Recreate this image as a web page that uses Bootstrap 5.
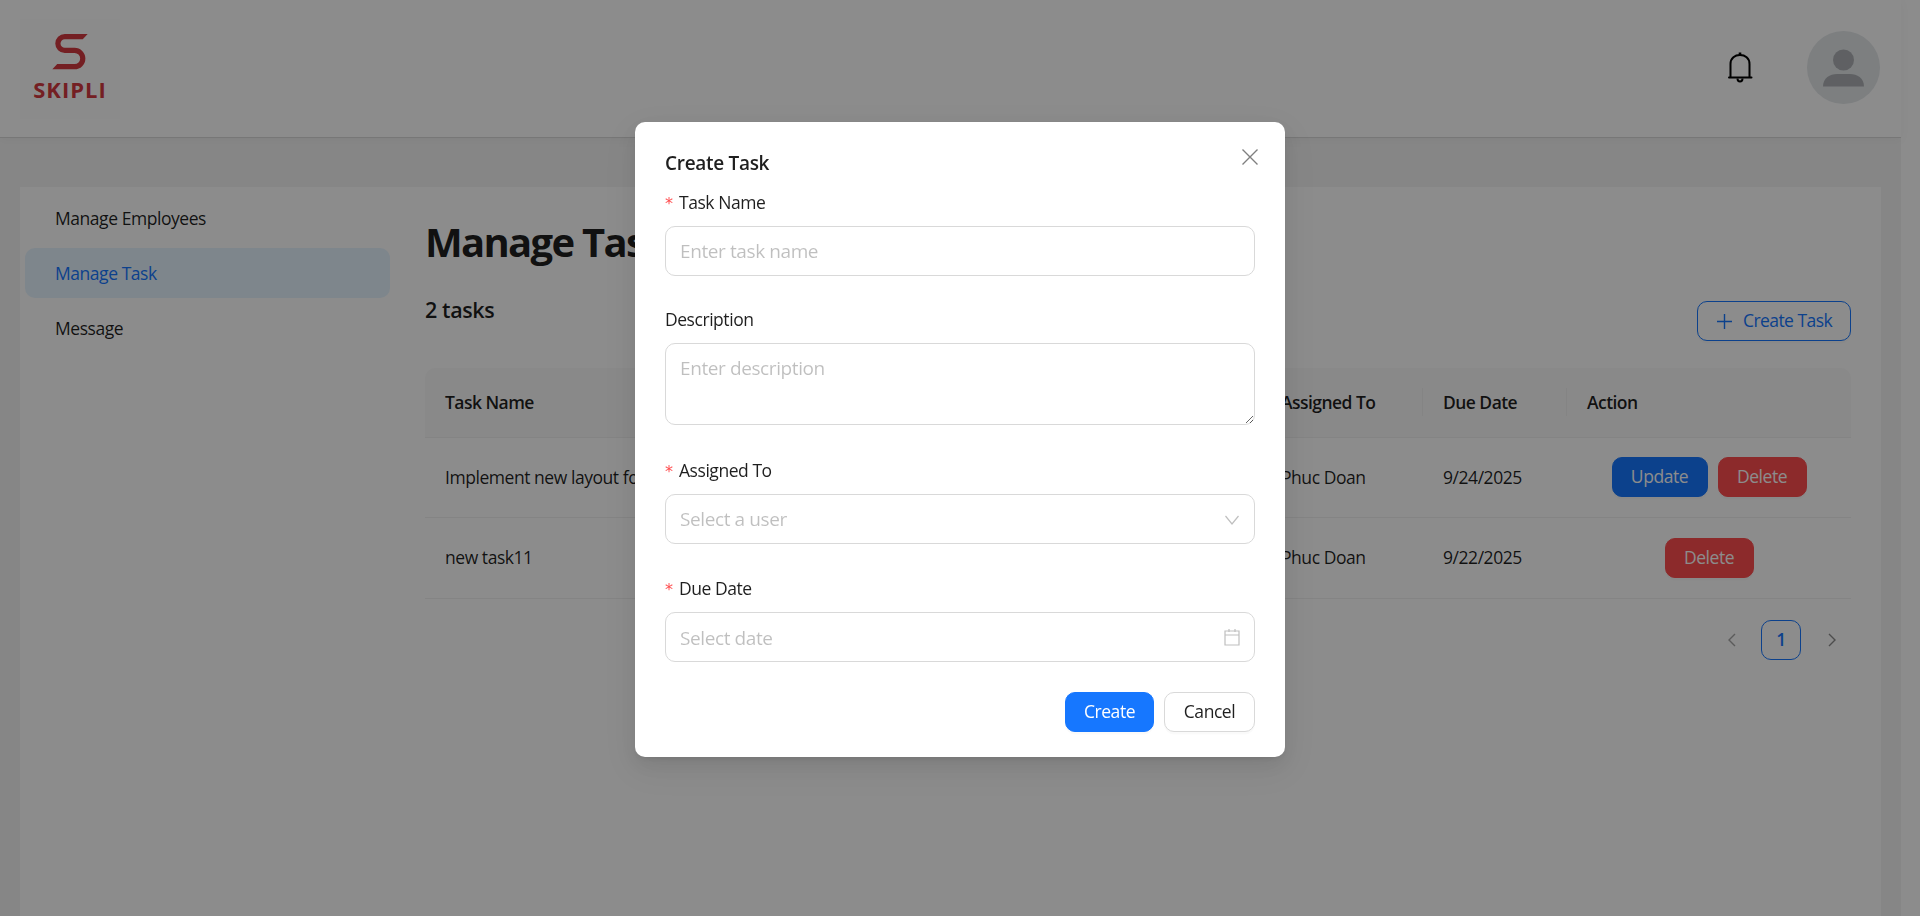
<!DOCTYPE html>
<html lang="en">
<head>
<meta charset="utf-8">
<title>Manage Task</title>
<link href="https://cdn.jsdelivr.net/npm/bootstrap@5.3.0/dist/css/bootstrap.min.css" rel="stylesheet">
<style>
html,body{height:100%;overflow:hidden}
body{background:#fff;padding-right:19px;font-family:"Open Sans","Noto Sans",sans-serif;font-size:17.5px;color:rgba(0,0,0,.88);letter-spacing:-.45px}
.shell{height:916px;background:#f5f5f5;display:flex;flex-direction:column}
.topbar{height:138px;flex:none;background:#fff;border-bottom:1px solid #d9d9d9;box-shadow:0 2px 10px rgba(0,0,0,.04);padding:0 20px}
.logo-box{width:100px;height:100px;background:#fefefe;display:flex;flex-direction:column;align-items:center;padding-top:14px}
.logo-word{font-family:"Open Sans",sans-serif;font-weight:700;font-size:22px;line-height:26px;color:#d33a40;letter-spacing:1px;margin-top:5px}
.bell-wrap{width:44px;height:50px;margin-right:44px;margin-top:-7px}
.avatar-wrap{width:73px;height:73px;margin-right:1px;margin-top:-3px}
.panel-wrap{flex:1;padding:49px 20px 0 20px;min-height:0}
.panel{height:100%;background:#fff;display:flex}
.side{width:375px;flex:none;padding:6px 5px 0 5px}
.side-link{display:block;height:50px;line-height:50px;padding-left:30px;margin-bottom:5px;border-radius:10px;color:rgba(0,0,0,.88);text-decoration:none}
.side-link.is-on{background:#e6f4ff;color:#1677ff}
.work{flex:1;padding:25px 30px 0 30px;min-width:0}
.work h1{font-family:"Open Sans",sans-serif;font-size:40px;line-height:60px;font-weight:700;margin:0;letter-spacing:-1.7px}
.toolbar{height:96px}
.count{font-size:21.5px;line-height:30px;font-weight:600;margin-top:23px;letter-spacing:-.4px}
.btn-x{height:40px;border-radius:10px;font-size:17.5px;line-height:1;padding:0;letter-spacing:-.45px;white-space:nowrap;box-shadow:0 2.5px 0 rgba(0,0,0,.02)}
.btn-new{margin-top:29px;color:#1677ff;border:1px solid #1677ff;background:#fff;width:154px;display:inline-flex;align-items:center;gap:10px;justify-content:center;letter-spacing:-.55px}
.btn-up{background:#1677ff;border:1px solid #1677ff;color:#fff;width:96px}
.btn-del{background:#ff4d4f;border:1px solid #ff4d4f;color:#fff;width:89px}
.btn-off{background:#fff;border:1px solid #d9d9d9;color:rgba(0,0,0,.88);width:91px}
.tasks{table-layout:fixed;margin:0;--bs-table-color:rgba(0,0,0,.88);--bs-table-border-color:#f0f0f0}
.c-name{width:575px}.c-desc{width:261px}.c-user{width:162px}.c-date{width:144px}.c-act{width:284px}
.tasks th{background:#fafafa;font-weight:600;height:69px;padding:0 20px;vertical-align:middle;position:relative;border-bottom:1px solid #f0f0f0;letter-spacing:-.55px}
.tasks th:first-child{border-top-left-radius:10px}
.tasks th:last-child{border-top-right-radius:10px}
.tasks th:not(:last-child)::after{content:"";position:absolute;right:0;top:20px;height:28px;width:1px;background:#f0f0f0}
.tasks td{height:81px;padding:0 20px;vertical-align:middle;font-weight:400;white-space:nowrap;overflow:hidden;text-overflow:ellipsis}
.tasks tbody tr:first-child td{height:80px}
.act{display:flex;gap:10px;justify-content:center;align-items:center}
.pager{gap:10px;margin-top:21px}
.pg{width:40px;height:40px;display:flex;align-items:center;justify-content:center;border-radius:10px;font-weight:600;font-size:17.5px}
.pg-on{border:1px solid #1677ff;color:#1677ff}
.veil{opacity:.45!important;background:#000;--bs-backdrop-opacity:.45}
.sheet{display:block;padding:0;overflow:hidden}
.sheet .modal-dialog{width:650px;max-width:650px;margin:122px auto 0}
.sheet .modal-content{border:0;border-radius:10px;padding:28px 30px 25px;box-shadow:0 7.5px 20px rgba(0,0,0,.08),0 4px 7px -4px rgba(0,0,0,.12),0 11px 35px 10px rgba(0,0,0,.05)}
.sheet-title{font-size:19px;font-weight:600;line-height:26px;margin:0 0 13px;letter-spacing:-.3px}
.sheet-close{position:absolute;right:26px;top:26px;background:none;border:0;padding:0;width:18px;height:18px;display:flex}
.fld,.fld-wide,.fld-next,.fld-last{margin-bottom:30px}
.fld-wide{margin-bottom:32px}
.fld-next{margin-bottom:31px}
.fld-last{margin-bottom:30px}
.fld label,.fld-wide label,.fld-next label,.fld-last label{display:block;line-height:27.5px;margin:0 0 10px;font-size:17.5px}
.fld label,.fld-next label{margin-bottom:9px}
.star{color:#ff4d4f;font-family:"DejaVu Sans",sans-serif;display:inline-block;width:14px;letter-spacing:0;font-size:16px;line-height:1}
.fc{height:50px;border:1px solid #d9d9d9;border-radius:10px;padding:0 14px;font-size:19px;letter-spacing:-.4px;color:rgba(0,0,0,.88);box-shadow:none}
.fc::placeholder{color:rgba(0,0,0,.25)}
textarea.fc{height:82px;padding-top:11px;line-height:27.5px;display:block}
.fake{display:flex;align-items:center;justify-content:space-between;color:rgba(0,0,0,.25);padding-top:2px}
.date-box{position:relative}
.date-box .fc{padding-top:1px}
.date-ico{position:absolute;right:14px;top:15px;display:flex}
.foot{display:flex;justify-content:flex-end;gap:10px}
.foot .btn-up{width:89px}
</style>
</head>
<body>
<div class="shell">
  <header class="topbar d-flex align-items-center justify-content-between">
    <div class="logo-box">
      <svg width="36" height="38" viewBox="96 40 110 114"><path d="M205 42L190 58H135A13 13 0 0 0 135 84H165A33 33 0 0 1 165 150H97L112 134H165A17 17 0 0 0 165 100H135A29 29 0 0 1 135 42Z" fill="#d33a40"/></svg>
      <div class="logo-word">SKIPLI</div>
    </div>
    <div class="d-flex align-items-center">
      <div class="bell-wrap">
        <svg width="44" height="50" viewBox="0 0 44 50" fill="none" stroke="#000" stroke-width="2"><path d="M11.500 37V24C11.500 18 16 15 21 15S30.500 18 30.500 24V37"/><path d="M10 37.500H32.500" stroke-linecap="round"/><path d="M21 12.500V15" stroke-width="2.600"/><path d="M18.500 38.500C18.500 42.500 23.500 42.500 23.500 38.500"/></svg>
      </div>
      <div class="avatar-wrap">
        <svg width="73" height="73" viewBox="0 0 73 73"><circle cx="36.500" cy="36.500" r="36.500" fill="#e3e7ea"/><circle cx="36.500" cy="29" r="10.500" fill="#adb0b4"/><path d="M16 55.500C16 47 23 43 30 43H43C50 43 57 47 57 55.500Z" fill="#adb0b4"/></svg>
      </div>
    </div>
  </header>
  <div class="panel-wrap">
    <div class="panel">
      <nav class="side">
        <a class="side-link" href="#">Manage Employees</a>
        <a class="side-link is-on" href="#">Manage Task</a>
        <a class="side-link" href="#">Message</a>
      </nav>
      <main class="work">
        <h1>Manage Task</h1>
        <div class="toolbar d-flex justify-content-between align-items-start">
          <div class="count">2 tasks</div>
          <button class="btn btn-x btn-new" type="button">
            <svg width="17" height="17" viewBox="0 0 17 17" fill="none" stroke="currentColor" stroke-width="1.400"><path d="M8.500 1V16M1 8.500H16"/></svg>Create Task</button>
        </div>
        <table class="table tasks">
          <colgroup><col class="c-name"><col class="c-desc"><col class="c-user"><col class="c-date"><col class="c-act"></colgroup>
          <thead><tr><th>Task Name</th><th>Description</th><th>Assigned To</th><th>Due Date</th><th>Action</th></tr></thead>
          <tbody>
            <tr><td>Implement new layout for</td><td>Layout update</td><td>Phuc Doan</td><td>9/24/2025</td><td><div class="act"><button class="btn btn-x btn-up" type="button">Update</button><button class="btn btn-x btn-del" type="button">Delete</button></div></td></tr>
            <tr><td>new task11</td><td>New task</td><td>Phuc Doan</td><td>9/22/2025</td><td><div class="act"><button class="btn btn-x btn-del" type="button">Delete</button></div></td></tr>
          </tbody>
        </table>
        <div class="pager d-flex justify-content-end">
          <div class="pg"><svg width="11" height="16" viewBox="0 0 11 16" fill="none" stroke="#a6a6a6" stroke-width="1.400"><path d="M9 2L3 8L9 14"/></svg></div>
          <div class="pg pg-on">1</div>
          <div class="pg"><svg width="11" height="16" viewBox="0 0 11 16" fill="none" stroke="#8c8c8c" stroke-width="1.400"><path d="M3 2L9 8L3 14"/></svg></div>
        </div>
      </main>
    </div>
  </div>
</div>

<div class="modal-backdrop show veil"></div>
<div class="modal show sheet" tabindex="-1" role="dialog" aria-modal="true">
  <div class="modal-dialog">
    <div class="modal-content">
      <button class="sheet-close" type="button" aria-label="Close"><svg width="18" height="18" viewBox="0 0 18 18" fill="none" stroke="#7f7f7f" stroke-width="1.400"><path d="M1.500 1.500L16.500 16.500M16.500 1.500L1.500 16.500"/></svg></button>
      <h2 class="sheet-title">Create Task</h2>
      <form>
        <div class="fld"><label><span class="star">*</span>Task Name</label><input class="form-control fc" placeholder="Enter task name"></div>
        <div class="fld-wide"><label>Description</label><textarea class="form-control fc" placeholder="Enter description"></textarea></div>
        <div class="fld-next"><label><span class="star">*</span>Assigned To</label><div class="form-control fc fake"><span>Select a user</span><svg width="16" height="12" viewBox="0 0 16 12" fill="none" stroke="#bfbfbf" stroke-width="1.200"><path d="M1.500 2L8 10L14.500 2"/></svg></div></div>
        <div class="fld-last"><label><span class="star">*</span>Due Date</label><div class="date-box"><input class="form-control fc" placeholder="Select date"><span class="date-ico"><svg width="18" height="20" viewBox="0 0 18 20" fill="none" stroke="#bfbfbf" stroke-width="1.200"><path d="M2 4H16V18H2ZM2 8H16M6 2V5M12 2V5"/></svg></span></div></div>
        <div class="foot"><button class="btn btn-x btn-up" type="button">Create</button><button class="btn btn-x btn-off" type="button">Cancel</button></div>
      </form>
    </div>
  </div>
</div>
<script src="https://cdn.jsdelivr.net/npm/bootstrap@5.3.0/dist/js/bootstrap.bundle.min.js"></script>
</body>
</html>
